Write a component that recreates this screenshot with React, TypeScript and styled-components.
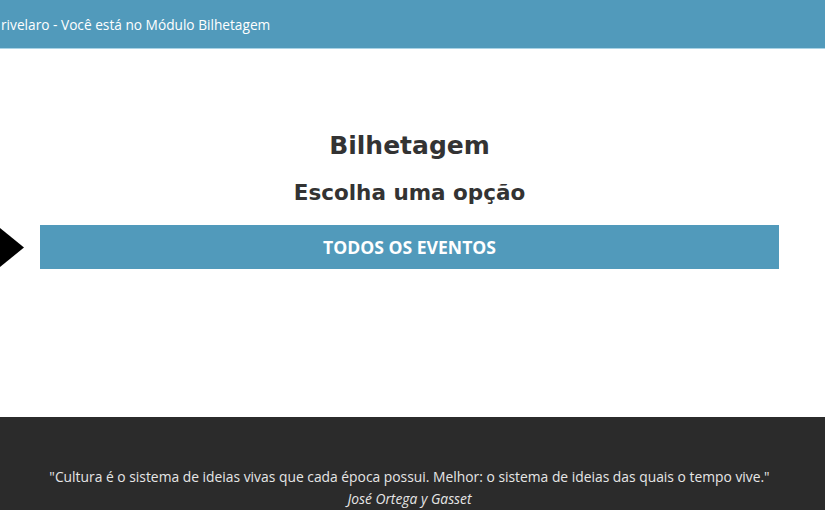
import styled, { createGlobalStyle } from "styled-components";

const GlobalStyle = createGlobalStyle`
  html, body {
    margin: 0;
    padding: 0;
    background: #fff;
    font-family: "Open Sans", "Liberation Sans", sans-serif;
    overflow: hidden;
  }
`

const Page = styled.div`
  display: flex;
  flex-direction: column;
  min-height: 510px;
`

const TopBar = styled.header`
  height: 48px;
  background: #519abb;
  border-bottom: 1px solid #a9d3e6;
  display: flex;
  align-items: center;
  color: #fff;
  font-size: 13.7px;
  padding-left: 1px;
`

const Main = styled.main`
  position: relative;
  height: 368px;
  display: flex;
  flex-direction: column;
  align-items: center;
  padding: 0 46px 0 40px;
  box-sizing: border-box;
`

const Title = styled.h1`
  margin: 80px 0 0;
  font-family: "DejaVu Sans", "Noto Sans", sans-serif;
  font-size: 25px;
  font-weight: 700;
  line-height: 34px;
  color: #333;
`

const SubTitle = styled.h2`
  margin: 14px 0 0;
  font-family: "DejaVu Sans", "Noto Sans", sans-serif;
  font-size: 21.5px;
  font-weight: 700;
  line-height: 32px;
  color: #333;
`

const OptionButton = styled.button`
  margin-top: 16px;
  width: 100%;
  height: 44px;
  border: none;
  background: #519abb;
  color: #fff;
  font-family: "Open Sans", "Liberation Sans", sans-serif;
  font-size: 17.6px;
  font-weight: 700;
  cursor: pointer;
`

const Arrow = styled.svg`
  position: absolute;
  left: 0;
  top: 179px;
`

const Footer = styled.footer`
  flex: 1;
  background: #2b2b2b;
  color: #e6e6e6;
  font-size: 13.85px;
  text-align: center;
  padding-top: 49px;
  padding-right: 6px;
`

const Quote = styled.p`
  margin: 0;
  line-height: 22px;
`

const Author = styled.p`
  margin: 0;
  font-style: italic;
  line-height: 22px;
`

export default function App() {
    return (
        <Page>
            <GlobalStyle/>
            <TopBar>rivelaro - Você está no Módulo Bilhetagem</TopBar>
            <Main>
                <Title>Bilhetagem</Title>
                <SubTitle>Escolha uma opção</SubTitle>
                <OptionButton>TODOS OS EVENTOS</OptionButton>
                <Arrow width="26" height="40" viewBox="0 0 26 40">
                    <polygon points="0,0 24,19.5 0,39" fill="#000"/>
                </Arrow>
            </Main>
            <Footer>
                <Quote>"Cultura é o sistema de ideias vivas que cada época possui. Melhor: o sistema de ideias das quais o tempo vive."</Quote>
                <Author>José Ortega y Gasset</Author>
            </Footer>
        </Page>
    )
}
